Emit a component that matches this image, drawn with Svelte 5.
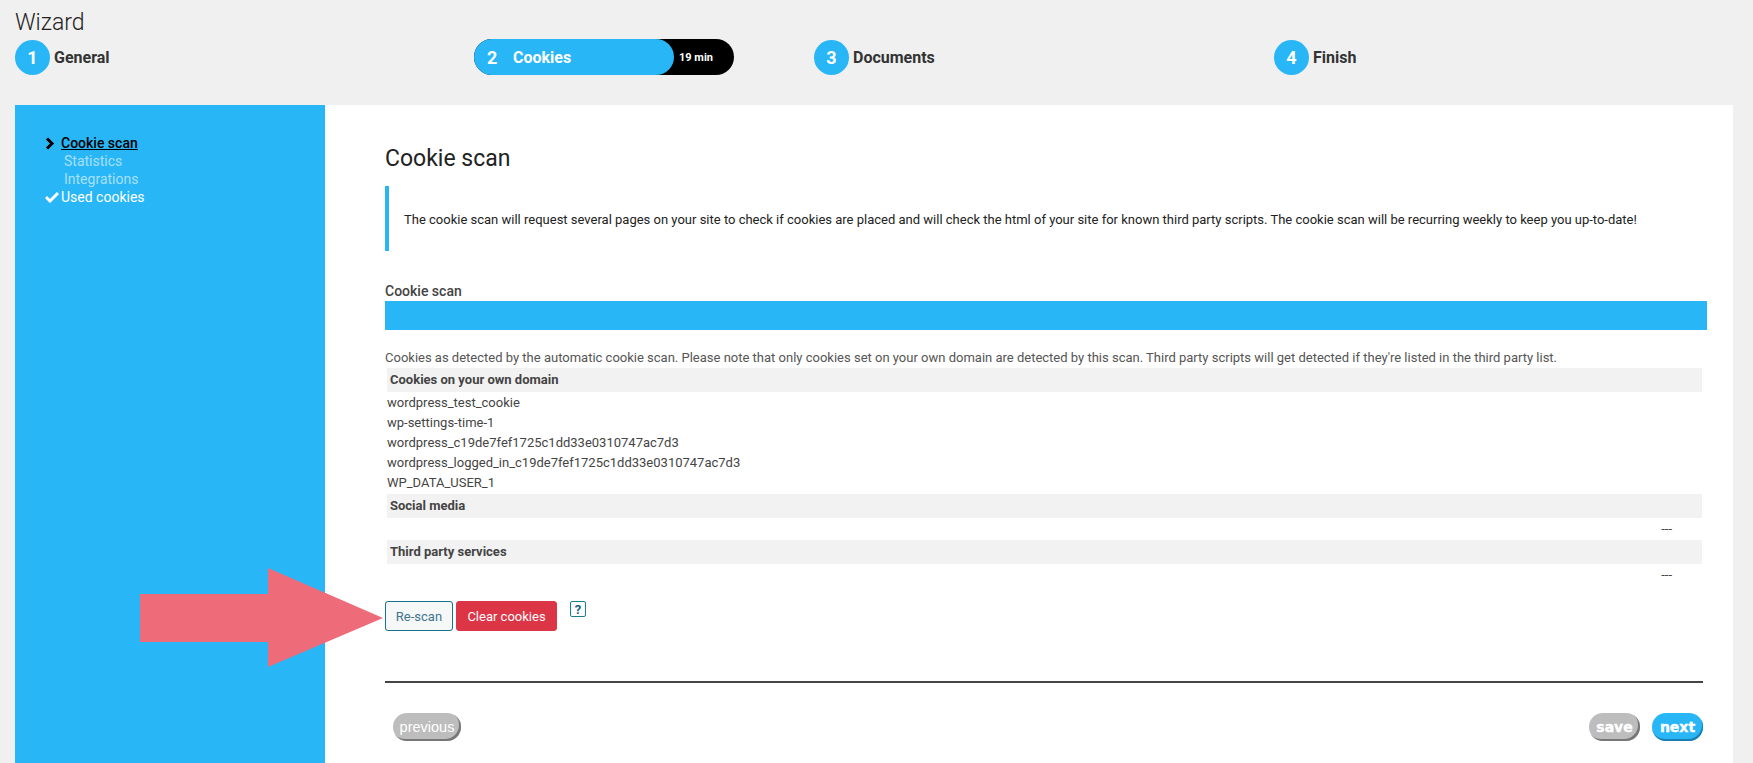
<script>
  const steps = [
    { n: 1, label: 'General' },
    { n: 2, label: 'Cookies', active: true, time: '19 min' },
    { n: 3, label: 'Documents' },
    { n: 4, label: 'Finish' },
  ];

  const menu = [
    { label: 'Cookie scan', state: 'active' },
    { label: 'Statistics', state: 'todo' },
    { label: 'Integrations', state: 'todo' },
    { label: 'Used cookies', state: 'done' },
  ];

  const ownCookies = [
    'wordpress_test_cookie',
    'wp-settings-time-1',
    'wordpress_c19de7fef1725c1dd33e0310747ac7d3',
    'wordpress_logged_in_c19de7fef1725c1dd33e0310747ac7d3',
    'WP_DATA_USER_1',
  ];
</script>

<div class="page">
  <h1>Wizard</h1>

  <div class="steps">
    {#each steps as step}
      {#if step.active}
        <div class="step-active">
          <div class="pill">
            <span class="pill-num">{step.n}</span>
            <span>{step.label}</span>
          </div>
          <span class="time">{step.time}</span>
        </div>
      {:else}
        <div class="step">
          <span class="circle">{step.n}</span>
          <span>{step.label}</span>
        </div>
      {/if}
    {/each}
  </div>

  <div class="wizard">
    <aside class="sidebar">
      {#each menu as item}
        <div class="menu-item {item.state}">
          <span class="menu-icon">
            {#if item.state === 'active'}
              <svg width="12" height="13" viewBox="0 0 12 13"><path d="M2 1.5 L7 6.5 L2 11.5" fill="none" stroke="#000" stroke-width="3" /></svg>
            {:else if item.state === 'done'}
              <svg width="15" height="12" viewBox="0 0 15 12"><path d="M1 6 L5 10 L13 2" fill="none" stroke="#fff" stroke-width="3" /></svg>
            {/if}
          </span>
          <span class="menu-label">{item.label}</span>
        </div>
      {/each}
    </aside>

    <main class="content">
      <h2>Cookie scan</h2>

      <div class="notice">
        The cookie scan will request several pages on your site to check if cookies are placed and will check the html of your site for known third party scripts. The cookie scan will be recurring weekly to keep you up-to-date!
      </div>

      <div class="field-label">Cookie scan</div>
      <div class="progress"></div>

      <p class="desc">Cookies as detected by the automatic cookie scan. Please note that only cookies set on your own domain are detected by this scan. Third party scripts will get detected if they're listed in the third party list.</p>

      <div class="cookies">
        <div class="cookie-head">Cookies on your own domain</div>
        <div class="cookie-list">
          {#each ownCookies as cookie}
            <div class="cookie-row">{cookie}</div>
          {/each}
        </div>
        <div class="cookie-head">Social media</div>
        <div class="cookie-empty">---</div>
        <div class="cookie-head">Third party services</div>
        <div class="cookie-empty">---</div>
      </div>

      <div class="actions">
        <button class="btn-outline">Re-scan</button>
        <button class="btn-danger">Clear cookies</button>
        <span class="help">?</span>
      </div>

      <hr />

      <div class="nav">
        <button class="round gray prev">previous</button>
        <div class="nav-right">
          <button class="round gray heavy">save</button>
          <button class="round blue heavy">next</button>
        </div>
      </div>
    </main>
  </div>

  <svg class="arrow" width="244" height="100" viewBox="0 0 244 100">
    <path d="M0 26 H128 V0 L243 50 L128 99 V74 H0 Z" fill="#ee6c7a" />
  </svg>
</div>

<style>
  :global(body) {
    margin: 0;
    background: #f0f0f0;
  }

  .page {
    position: relative;
    width: 1753px;
    height: 763px;
    overflow: hidden;
    background: #f0f0f0;
    font-family: Roboto, "Liberation Sans", sans-serif;
    color: #333;
  }

  h1 {
    margin: 0;
    padding: 9px 0 0 15px;
    height: 30px;
    font-size: 23px;
    font-weight: 300;
    line-height: 27px;
    color: #222;
  }

  .steps {
    display: grid;
    grid-template-columns: 459px 340px 460px 1fr;
    padding-left: 15px;
    height: 36px;
    font-size: 16px;
    font-weight: 700;
  }

  .step {
    display: flex;
    align-items: center;
    gap: 4px;
  }

  .circle {
    display: flex;
    align-items: center;
    justify-content: center;
    width: 35px;
    height: 35px;
    border-radius: 50%;
    background: #29b6f6;
    color: #fff;
    font-size: 18px;
  }

  .step-active {
    display: flex;
    align-items: center;
    width: 260px;
    height: 36px;
    border-radius: 18px;
    background: #000;
    color: #fff;
  }

  .pill {
    display: flex;
    align-items: center;
    width: 200px;
    height: 36px;
    box-sizing: border-box;
    padding-left: 13px;
    border-radius: 18px;
    background: #29b6f6;
  }

  .pill-num {
    width: 26px;
    font-size: 18px;
  }

  .time {
    margin-left: 5px;
    font-size: 11px;
    font-weight: 700;
  }

  .wizard {
    display: flex;
    margin: 30px 20px 0 15px;
    height: 658px;
  }

  .sidebar {
    flex: 0 0 310px;
    box-sizing: border-box;
    padding-top: 29px;
    padding-left: 30px;
    background: #29b6f6;
    font-size: 14px;
  }

  .menu-item {
    display: flex;
    align-items: center;
    height: 18px;
    line-height: 18px;
  }

  .menu-icon {
    display: flex;
    align-items: center;
    width: 16px;
  }

  .active .menu-label {
    color: #000;
    font-weight: 500;
    text-decoration: underline;
  }

  .todo .menu-label {
    margin-left: 3px;
    color: #a8e0fb;
  }

  .done .menu-label {
    color: #fff;
  }

  .content {
    flex: 1;
    box-sizing: border-box;
    padding: 40px 26px 0 60px;
    background: #fff;
  }

  h2 {
    margin: 0;
    height: 41px;
    font-size: 23px;
    font-weight: 400;
    line-height: 28px;
    color: #222;
  }

  .notice {
    display: flex;
    align-items: center;
    height: 65px;
    box-sizing: border-box;
    padding: 2px 0 0 15px;
    border-left: 4px solid #29b6f6;
    font-size: 13px;
    color: #222;
    white-space: nowrap;
  }

  .field-label {
    margin-top: 31px;
    height: 19px;
    font-size: 14px;
    font-weight: 500;
    line-height: 18px;
    color: #444;
  }

  .progress {
    height: 29px;
    background: #29b6f6;
  }

  .desc {
    margin: 18px 0 0;
    height: 20px;
    font-size: 13px;
    line-height: 19px;
    color: #555;
    white-space: nowrap;
  }

  .cookies {
    width: 1315px;
    margin-left: 2px;
    font-size: 13px;
    color: #444;
  }

  .cookie-head {
    height: 24px;
    padding-left: 3px;
    background: #f2f2f2;
    font-weight: 700;
    line-height: 24px;
  }

  .cookie-list {
    padding: 1px 0;
  }

  .cookie-row {
    height: 20px;
    line-height: 20px;
  }

  .cookie-empty {
    height: 22px;
    padding-right: 30px;
    text-align: right;
    line-height: 22px;
  }

  .actions {
    display: flex;
    align-items: flex-start;
    gap: 3px;
    margin-top: 15px;
  }

  .actions button {
    height: 30px;
    box-sizing: border-box;
    padding: 0;
    border-radius: 3px;
    font-family: Roboto, "Liberation Sans", sans-serif;
    font-size: 13px;
  }

  .btn-outline {
    width: 68px;
    border: 1px solid #19708c;
    background: #f6f7f7;
    color: #3f7590;
  }

  .btn-danger {
    width: 101px;
    border: 1px solid #dc3545;
    background: #dc3545;
    color: #fff;
  }

  .help {
    display: flex;
    align-items: center;
    justify-content: center;
    width: 14px;
    height: 14px;
    margin-left: 10px;
    border: 1px solid #17808f;
    border-radius: 2px;
    color: #17647a;
    font-size: 13px;
    font-weight: 700;
  }

  hr {
    margin: 50px 0 0;
    width: 1318px;
    height: 2px;
    border: 0;
    background: #444;
  }

  .nav {
    display: flex;
    justify-content: space-between;
    width: 1318px;
    margin-top: 30px;
    padding-left: 8px;
    box-sizing: border-box;
  }

  .nav-right {
    display: flex;
    gap: 12px;
  }

  .round {
    height: 28px;
    padding: 0;
    border: 0;
    border-radius: 14px;
    color: #fff;
    font-size: 14px;
  }

  .gray {
    background: #bdbdbd;
    box-shadow: inset -2px -2px 0 #777;
  }

  .blue {
    background: #29b6f6;
    box-shadow: inset -1px -2px 0 #1a7fb0;
  }

  .prev {
    width: 68px;
    font-family: "Liberation Sans", sans-serif;
    font-size: 14.5px;
  }

  .heavy {
    width: 51px;
    font-family: "DejaVu Sans", sans-serif;
    font-size: 14px;
    font-weight: 700;
    -webkit-text-stroke: 0.4px #fff;
  }

  .arrow {
    position: absolute;
    left: 140px;
    top: 568px;
  }
</style>
